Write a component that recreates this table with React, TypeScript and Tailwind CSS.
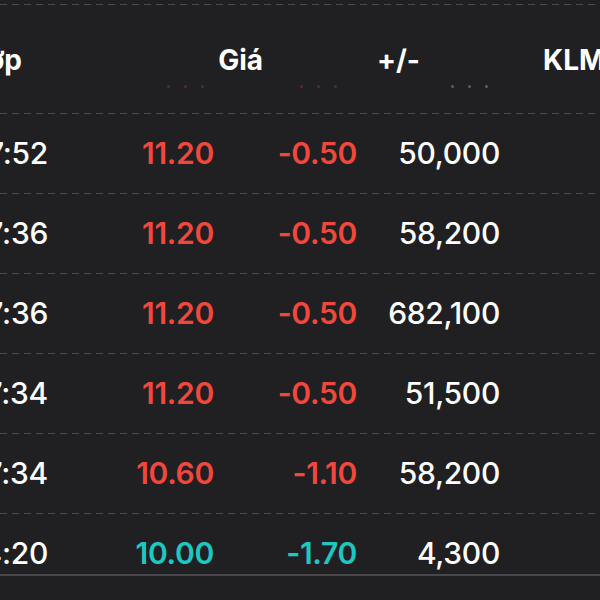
import React from "react";

type Trade = { time: string; price: string; change: string; volume: string; floor?: boolean };

const trades: Trade[] = [
    { time: "14:47:52", price: "11.20", change: "-0.50", volume: "50,000" },
    { time: "14:47:36", price: "11.20", change: "-0.50", volume: "58,200" },
    { time: "14:47:36", price: "11.20", change: "-0.50", volume: "682,100" },
    { time: "14:47:34", price: "11.20", change: "-0.50", volume: "51,500" },
    { time: "14:47:34", price: "10.60", change: "-1.10", volume: "58,200" },
    { time: "14:44:20", price: "10.00", change: "-1.70", volume: "4,300", floor: true },
];

const dashed = "h-px w-full bg-[linear-gradient(to_right,#4b4b4e_55%,transparent_55%)] bg-[length:12px_1px]";

function Dots({ color }: { color: string }) {
    return (
        <div className="flex gap-[14px]">
            <span className={`w-[3px] h-[3px] rounded-full ${color}`} />
            <span className={`w-[3px] h-[3px] rounded-full ${color}`} />
            <span className={`w-[3px] h-[3px] rounded-full ${color}`} />
        </div>
    );
}

function Row({ t }: { t: Trade }) {
    const color = t.floor ? "text-[#1cc8c2]" : "text-[#f2473d]";
    return (
        <div className="flex items-center h-[79px] text-[30px] font-semibold tracking-[-0.3px]">
            <div className="w-[158px] shrink-0 text-right text-white font-medium">{t.time}</div>
            <div className={`w-[166px] shrink-0 text-right ${color}`}>{t.price}</div>
            <div className={`w-[143px] shrink-0 text-right ${color}`}>{t.change}</div>
            <div className="w-[143px] shrink-0 text-right text-white font-medium">{t.volume}</div>
        </div>
    );
}

export default function App() {
    return (
        <div className="w-[600px] h-[600px] overflow-hidden bg-[#202022] font-['Inter',sans-serif]">
            <div className="pt-[4px]">
                <div className={dashed} />
                <div className="-ml-[110px] w-[800px]">
                    <div className="relative h-[108px]">
                        <div className="flex items-center pt-[34px] text-[28px] font-bold text-white">
                            <div className="w-[132px] shrink-0 text-right">Khớp</div>
                            <div className="w-[241px] shrink-0 text-right">Giá</div>
                            <div className="w-[114px] shrink-0" />
                            <div className="w-[166px] shrink-0">+/-</div>
                            <div className="w-[120px] shrink-0">KLM</div>
                        </div>
                        <div className="absolute top-[80px] left-[277px]"><Dots color="bg-[#62282a]" /></div>
                        <div className="absolute top-[80px] left-[410px]"><Dots color="bg-[#62282a]" /></div>
                        <div className="absolute top-[80px] left-[561px]"><Dots color="bg-[#5e5e60]" /></div>
                    </div>
                </div>
                {trades.map((t, i) => (
                    <div key={i}>
                        <div className={dashed} />
                        <div className="-ml-[110px] w-[800px]">
                            <Row t={t} />
                        </div>
                    </div>
                ))}
                <div className="-mt-[19px] h-[2px] w-full bg-[#48484c]" />
            </div>
        </div>
    );
}
